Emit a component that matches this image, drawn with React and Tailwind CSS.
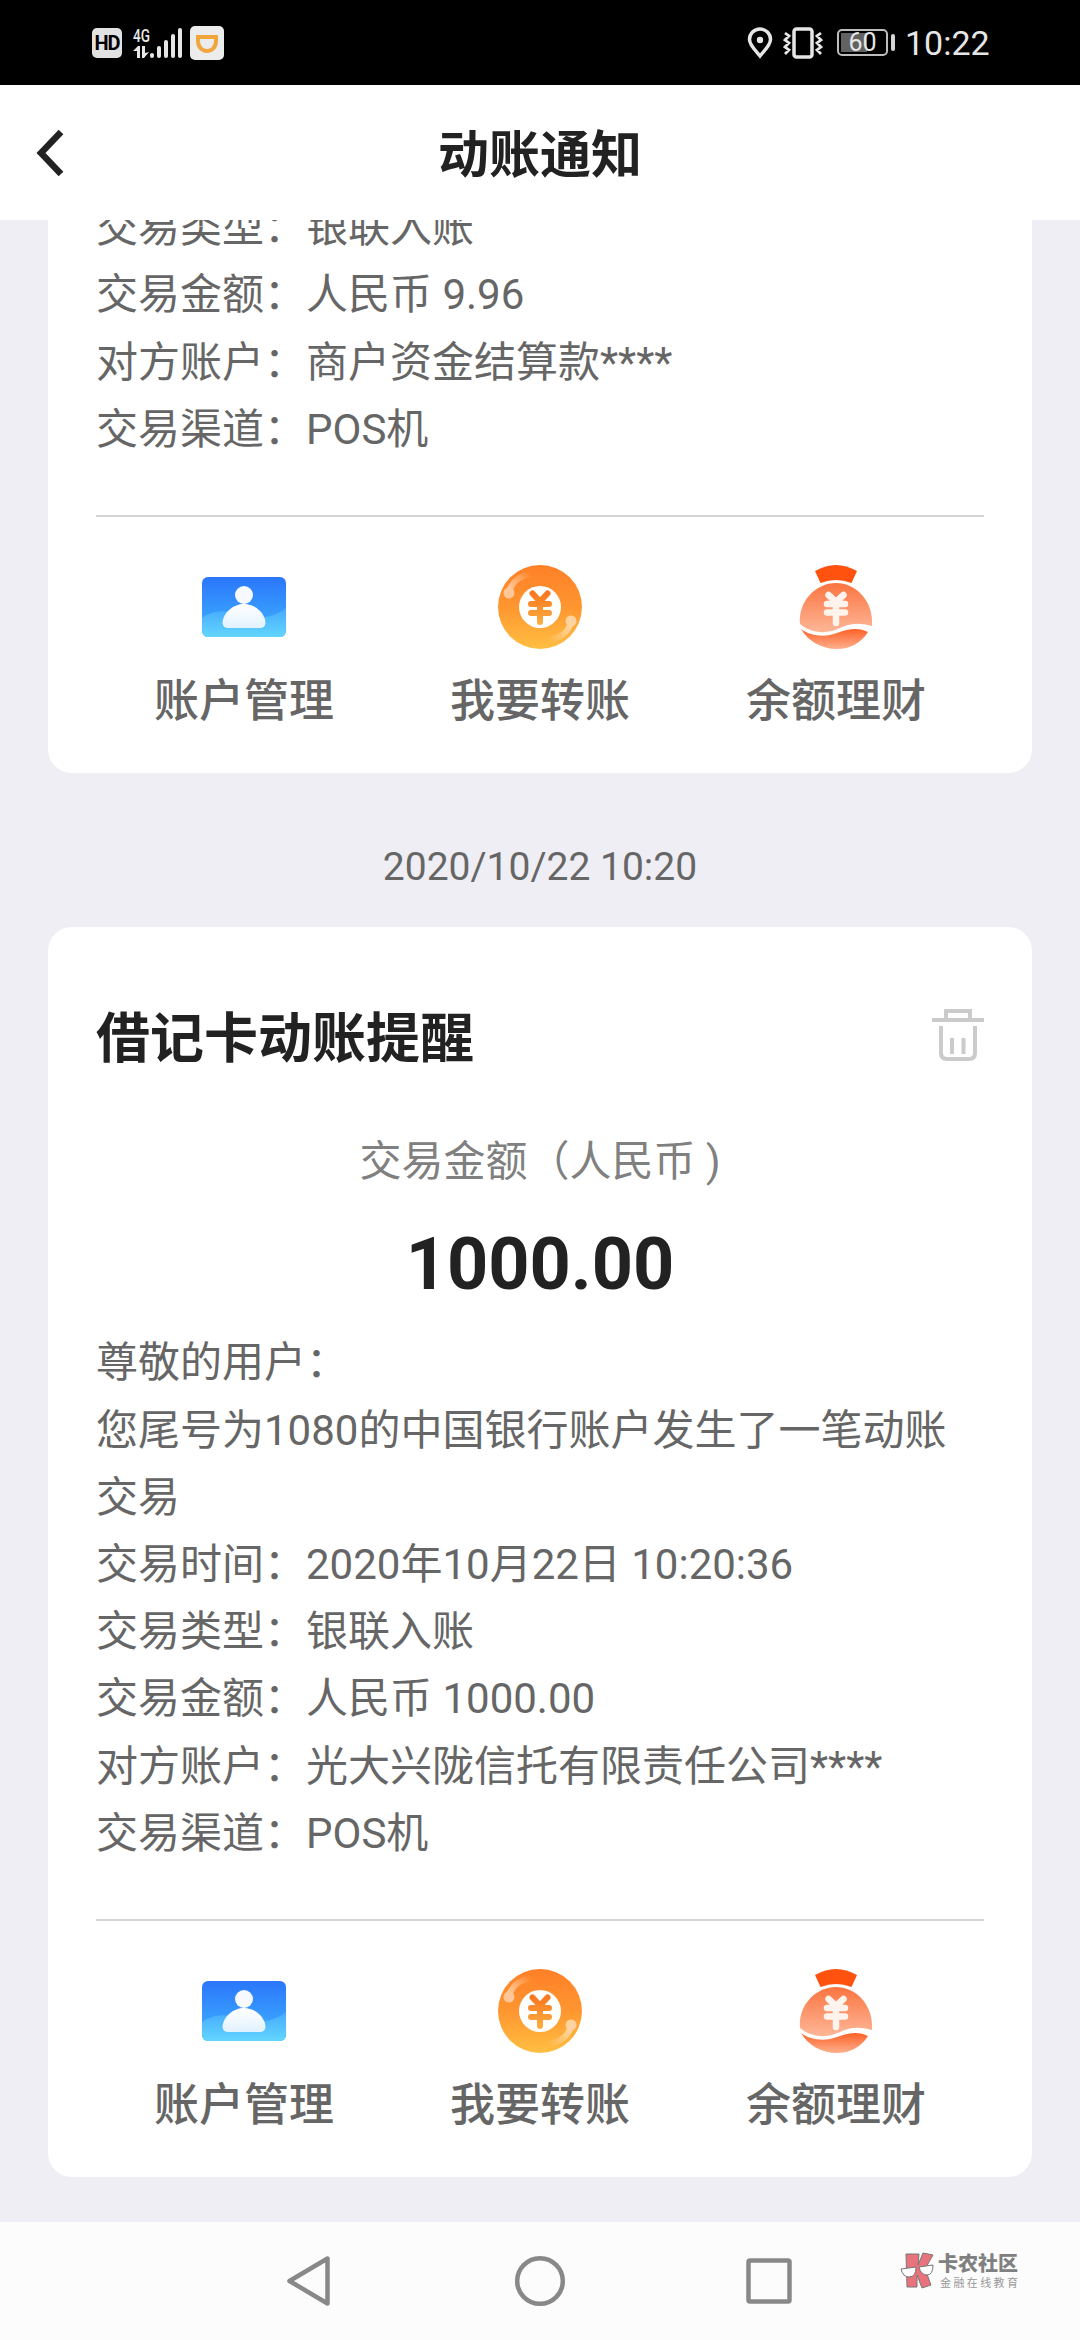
import React from 'react';

const actions = [
    { label: '账户管理', icon: CardIcon },
    { label: '我要转账', icon: CoinIcon },
    { label: '余额理财', icon: BagIcon },
];

const firstLines = [
    '交易类型：银联入账',
    '交易金额：人民币 9.96',
    '对方账户：商户资金结算款****',
    '交易渠道：POS机',
];

const secondLines = [
    '尊敬的用户：',
    '您尾号为1080的中国银行账户发生了一笔动账交易',
    '交易时间：2020年10月22日 10:20:36',
    '交易类型：银联入账',
    '交易金额：人民币 1000.00',
    '对方账户：光大兴陇信托有限责任公司****',
    '交易渠道：POS机',
];

function CardIcon() {
    return (
        <svg className="w-[84px] h-[84px]" viewBox="0 0 84 84">
            <defs>
                <linearGradient id="card-bg" x1="0" y1="0" x2="0" y2="1">
                    <stop offset="0" stopColor="#2b76fb" />
                    <stop offset="1" stopColor="#3fb4ff" />
                </linearGradient>
                <linearGradient id="card-wave" x1="0" y1="0" x2="0" y2="1">
                    <stop offset="0" stopColor="#46a9fd" />
                    <stop offset="1" stopColor="#62d6ff" />
                </linearGradient>
                <linearGradient id="card-man" x1="0" y1="0" x2="0" y2="1">
                    <stop offset="0" stopColor="#ffffff" />
                    <stop offset="1" stopColor="#e2f2ff" />
                </linearGradient>
            </defs>
            <rect y="12" width="84" height="60" rx="6" fill="url(#card-bg)" />
            <path d="M0 53C12 45 24 45 38 49C56 54 70 54 84 43V66a6 6 0 0 1-6 6H6a6 6 0 0 1-6-6Z" fill="url(#card-wave)" />
            <circle cx="42" cy="30" r="9" fill="#f6faff" />
            <path d="M42 39C52 39 63 47 63.500 58Q63 63 58 63H26Q21 63 20.500 58C21 47 32 39 42 39Z" fill="url(#card-man)" />
        </svg>
    );
}

function CoinIcon() {
    return (
        <svg className="w-[84px] h-[84px]" viewBox="0 0 84 84" fill="none">
            <defs>
                <linearGradient id="coin-bg" x1="0" y1="0" x2="0" y2="1">
                    <stop offset="0" stopColor="#ff7f27" />
                    <stop offset="0.5" stopColor="#fe9630" />
                    <stop offset="1" stopColor="#ffbf42" />
                </linearGradient>
                <linearGradient id="coin-yen" gradientUnits="userSpaceOnUse" x1="0" y1="26" x2="0" y2="60">
                    <stop offset="0" stopColor="#f9741f" />
                    <stop offset="1" stopColor="#fbb040" />
                </linearGradient>
                <linearGradient id="coin-hi-a" gradientUnits="userSpaceOnUse" x1="11" y1="28" x2="33" y2="8">
                    <stop offset="0" stopColor="#ffd0a4" />
                    <stop offset="1" stopColor="#ffd0a4" stopOpacity="0" />
                </linearGradient>
                <linearGradient id="coin-hi-b" gradientUnits="userSpaceOnUse" x1="73" y1="56" x2="51" y2="76">
                    <stop offset="0" stopColor="#ffdcae" />
                    <stop offset="1" stopColor="#ffdcae" stopOpacity="0" />
                </linearGradient>
            </defs>
            <circle cx="42" cy="42" r="42" fill="url(#coin-bg)" />
            <path d="M11 27Q15 12 33 9" stroke="url(#coin-hi-a)" strokeWidth="6" />
            <circle cx="11" cy="28" r="5.500" fill="#ffc798" />
            <path d="M73 57Q69 72 51 75" stroke="url(#coin-hi-b)" strokeWidth="6" />
            <circle cx="73" cy="56" r="5.500" fill="#ffd3a0" />
            <circle cx="42" cy="42" r="21" fill="#fff" />
            <path d="M34.500 28.500L42 36.500L49.500 28.500M33 39H51M33 48H51M42 37V57" stroke="url(#coin-yen)" strokeWidth="6" strokeLinecap="round" />
        </svg>
    );
}

function BagIcon() {
    return (
        <svg className="w-[84px] h-[84px]" viewBox="0 0 84 84" fill="none">
            <defs>
                <linearGradient id="bag-body" gradientUnits="userSpaceOnUse" x1="0" y1="18" x2="0" y2="66">
                    <stop offset="0" stopColor="#fb7440" />
                    <stop offset="1" stopColor="#fdb595" />
                </linearGradient>
                <linearGradient id="bag-base" gradientUnits="userSpaceOnUse" x1="0" y1="62" x2="0" y2="84">
                    <stop offset="0" stopColor="#fd5a1e" />
                    <stop offset="1" stopColor="#fdb08d" />
                </linearGradient>
            </defs>
            <path d="M21 6Q42 -6 63 6L57.500 18Q42 12 26.500 18Z" fill="#ff520f" />
            <path d="M6 59C4 36 22 18 42 18C62 18 80 36 78 61C58 55 50 62 38 66C26 69 14 66 6 59Z" fill="url(#bag-body)" />
            <path d="M7 64C18 72 32 72 43 68C56 63 66 63 74 67C67 78 56 84 43 84C27 84 14 76 7 64Z" fill="url(#bag-base)" />
            <path d="M34.500 30L42 37L49.500 30M33 39H51M33 47.500H51M42 37V58" stroke="#fff3ee" strokeWidth="6.500" strokeLinecap="round" />
        </svg>
    );
}

const TrashIcon = () => (
    <svg className="w-[52px] h-[52px] mt-[14px]" viewBox="0 0 52 52" fill="none" stroke="#cbcbcb" strokeWidth="4">
        <path d="M0 11H52M14 11V2H38V11M9 17V44Q9 50 15 50H37Q43 50 43 44V17M20 29V45M31.500 29V45" />
    </svg>
);

const StatusBar = () => (
    <div className="h-[85px] shrink-0 bg-black flex items-center justify-between pl-[92px] pr-[91px] text-[#e6e6e6] font-['Roboto',sans-serif]">
        <div className="flex items-center">
            <div className="w-[30px] h-[30px] rounded-[5px] bg-[#e2e2e2] text-black text-[20px] leading-none font-bold flex items-center justify-center tracking-[-1px]">HD</div>
            <svg className="w-[51px] h-[34px] ml-[11px] overflow-visible" viewBox="0 0 51 34" fill="#e6e6e6">
                <text x="0" y="16" fontSize="18" fontWeight="500" textLength="17" lengthAdjust="spacingAndGlyphs">4G</text>
                <path d="M0 25L5 20H7V32H4V25ZM9 20H12V27L16 26L11 32H9Z" />
                <rect x="17" y="27" width="4" height="5" rx="2" />
                <rect x="24" y="20" width="4" height="12" rx="2" />
                <rect x="31" y="14" width="4" height="18" rx="2" />
                <rect x="38" y="8" width="4" height="24" rx="2" />
                <rect x="45" y="2" width="4" height="30" rx="2" />
            </svg>
            <svg className="w-[34px] h-[34px] ml-[6px]" viewBox="0 0 34 34" fill="none">
                <rect width="34" height="34" rx="5" fill="#ececec" />
                <path d="M6 11H26V15C26 21 22 25 17 25C12 25 8 21 8 15V11" stroke="#f0a63c" strokeWidth="4" />
            </svg>
        </div>
        <div className="flex items-center">
            <svg className="w-[26px] h-[32px]" viewBox="0 0 26 32" fill="none">
                <path d="M13 29C8 23 2.500 18 2.500 12.500A10.500 10.500 0 0 1 23.500 12.500C23.500 18 18 23 13 29Z" stroke="#e6e6e6" strokeWidth="3.500" />
                <circle cx="13" cy="13" r="3.200" fill="#e6e6e6" />
            </svg>
            <svg className="w-[40px] h-[32px] ml-[10px]" viewBox="0 0 40 32" fill="none" stroke="#e6e6e6" strokeWidth="3">
                <rect x="11" y="2" width="18" height="28" rx="2.500" strokeWidth="3.500" />
                <path d="M2 6L6 9L2 13L6 16L2 20L6 23L2 27M38 6L34 9L38 13L34 16L38 20L34 23L38 27" strokeWidth="2.800" />
            </svg>
            <div className="relative w-[51px] h-[27px] ml-[14px] border-2 border-[#bdbdbd] rounded-[5px] p-[2px]">
                <div className="w-[26px] h-full bg-[#626262]" />
                <span className="absolute inset-0 flex items-center justify-center text-[25px] leading-none">60</span>
            </div>
            <div className="w-[4px] h-[17px] rounded-full bg-[#d5d5d5] ml-[3px]" />
            <span className="text-[34px] leading-none ml-[10px] w-[84px]">10:22</span>
        </div>
    </div>
);

const Card = ({ children, lines }) => (
    <div className="mx-[48px] shrink-0 bg-white rounded-[24px] px-[48px] flex flex-col">
        {children}
        <div className="text-[42px] leading-[67.2px] text-[#666]">
            {lines.map((line) => (
                <p key={line}>{line}</p>
            ))}
        </div>
        <div className="h-[2px] bg-[#d4d4d4] mt-[52px]" />
        <div className="grid grid-cols-3 pt-[48px] h-[256px]">
            {actions.map(({ label, icon: Icon }) => (
                <div key={label} className="flex flex-col items-center">
                    <Icon />
                    <span className="mt-[20px] text-[45px] leading-[66px] font-medium text-[#666]">{label}</span>
                </div>
            ))}
        </div>
    </div>
);

const NavBar = () => (
    <div className="relative h-[118px] shrink-0 bg-[#fcfcfc] flex items-center justify-center">
        <svg className="w-[510px] h-[54px]" viewBox="0 0 510 54" fill="none" stroke="#888" strokeWidth="4.500" strokeLinejoin="round">
            <path d="M4.500 27L42.500 4.500V49.500Z" />
            <circle cx="255" cy="27" r="22.800" />
            <rect x="463.500" y="6.500" width="41" height="41" rx="1.500" />
        </svg>
        <div className="absolute left-[900px] top-[29px] flex">
            <svg className="w-[34px] h-[38px]" viewBox="0 0 34 38">
                <path d="M6 3H19L18 14L23 2L33 4L25 18L31 34L22 37L17 24V36H7Z" fill="#e8737d" stroke="#777" strokeWidth="1" />
                <path d="M1 18L16 16Q16 26 9 26Q3 26 1 18ZM19 16L33 14Q33 24 27 24Q21 24 19 16Z" fill="#fff" stroke="#777" strokeWidth="1" />
            </svg>
            <div className="ml-[4px] flex flex-col">
                <span className="text-[20px] leading-[27px] font-black text-[#808080]">卡农社区</span>
                <span className="pl-[2px] text-[11px] leading-[11px] tracking-[2.4px] text-[#999] whitespace-nowrap">金融在线教育</span>
            </div>
        </div>
    </div>
);

const App = () => {
    return (
        <div className="w-[1080px] h-[2340px] overflow-hidden flex flex-col bg-[#efeef4] font-['Roboto','Noto_Sans_CJK_SC',sans-serif]">
            <StatusBar />

            <header className="relative h-[135px] shrink-0 bg-white flex items-center justify-center">
                <svg className="absolute left-[36px] top-[44px] w-[30px] h-[48px]" viewBox="0 0 30 48" fill="none" stroke="#222" strokeWidth="6.500">
                    <path d="M25 3L5 24L25 45" />
                </svg>
                <h1 className="pt-[5px] text-[51px] leading-none font-bold text-[#222]">动账通知</h1>
            </header>

            <main className="flex-1 min-h-0 overflow-hidden flex flex-col justify-end pb-[45px]">
                <Card lines={firstLines} />

                <div className="h-[154px] shrink-0 pt-[64px] text-center text-[39px] leading-[60px] text-[#666]">2020/10/22 10:20</div>

                <Card lines={secondLines}>
                    <div className="mt-[68px] h-[80px] flex items-start justify-between">
                        <h2 className="mt-[5px] text-[54px] leading-[80px] font-bold text-[#222]">借记卡动账提醒</h2>
                        <TrashIcon />
                    </div>
                    <p className="mt-[53px] text-center text-[42px] leading-[67px] text-[#808080]">交易金额（人民币 )</p>
                    <p className="mt-[28px] mb-[22.4px] text-center text-[72px] leading-[84px] font-bold text-[#222]">1000.00</p>
                </Card>
            </main>

            <NavBar />
        </div>
    );
};

export default App;
